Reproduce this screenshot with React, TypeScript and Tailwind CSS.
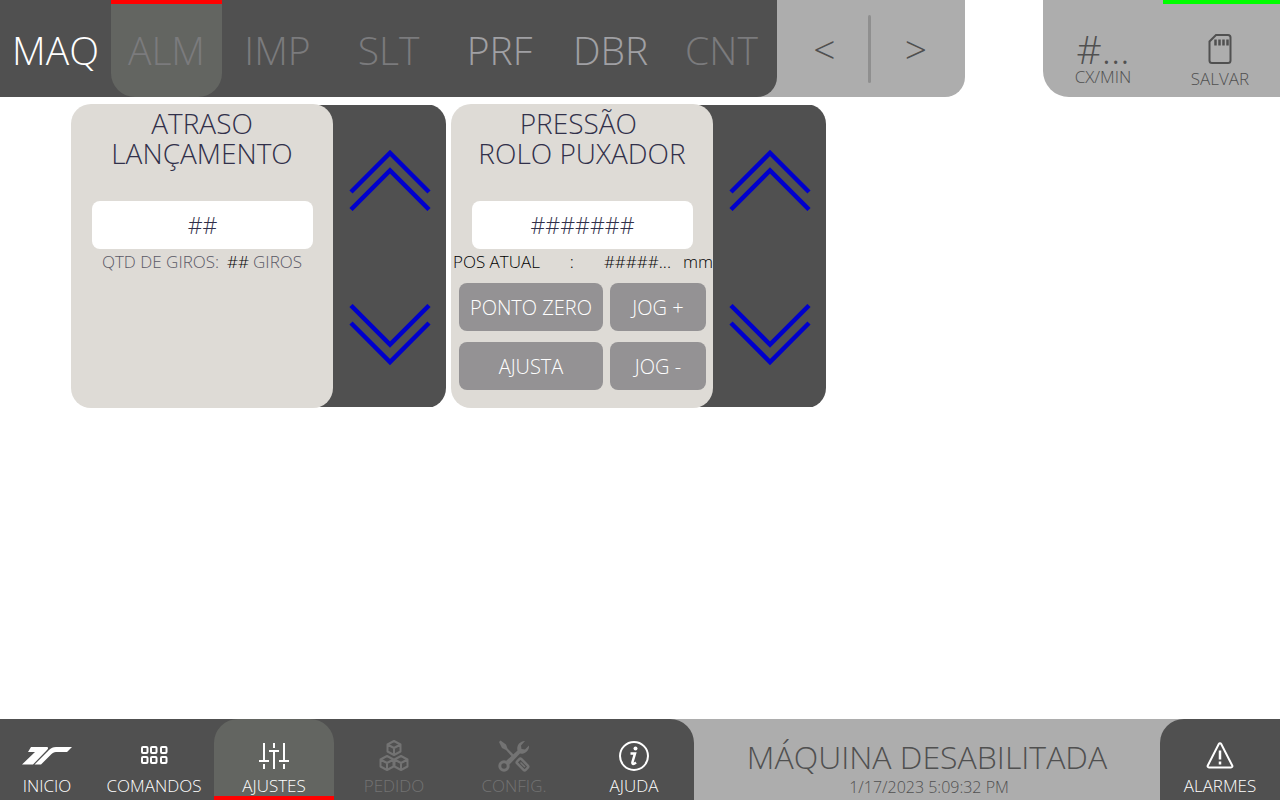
import type { ReactNode } from "react";

type Tab = { label: string; tone: string; active?: boolean };

const tabs: Tab[] = [
  { label: "MAQ", tone: "text-white" },
  { label: "ALM", tone: "text-[#7b7b7d]", active: true },
  { label: "IMP", tone: "text-[#7b7b7d]" },
  { label: "SLT", tone: "text-[#7b7b7d]" },
  { label: "PRF", tone: "text-[#a0a0a4]" },
  { label: "DBR", tone: "text-[#a0a0a4]" },
  { label: "CNT", tone: "text-[#7b7b7d]" },
];

function TopTab({ label, tone, active }: Tab) {
  return (
    <button
      type="button"
      className={`h-full w-[111px] border-t-4 pb-[2px] text-[39px] leading-none font-light ${tone} ${
        active ? "rounded-b-3xl border-[#ff0000] bg-[#636561]" : "border-transparent"
      }`}
    >
      {label}
    </button>
  );
}

function Header() {
  return (
    <header className="flex h-[97px] justify-between">
      <div className="flex rounded-br-[20px] bg-[#adadad]">
        <nav className="flex rounded-br-[20px] bg-[#505050]">
          {tabs.map((tab) => (
            <TopTab key={tab.label} {...tab} />
          ))}
        </nav>
        <div className="flex items-center text-[39px] leading-none font-light text-[#505050]">
          <button type="button" aria-label="Anterior" className="h-full w-[91px] pl-1">
            &lt;
          </button>
          <span className="h-[68px] w-[3px] rounded bg-[#8f8f8f]" />
          <button type="button" aria-label="Próximo" className="h-full w-[94px] pr-1">
            &gt;
          </button>
        </div>
      </div>
      <div className="flex rounded-bl-[26px] bg-[#adadad] text-[#505050]">
        <div className="flex w-[120px] flex-col items-center pt-[33px]">
          <span className="text-[39px] leading-8 font-light">#...</span>
          <span className="text-[17px] leading-6 font-light">CX/MIN</span>
        </div>
        <button
          type="button"
          className="flex w-[117px] flex-col items-center border-t-4 border-[#00ff00] pt-[29px] pr-[3px]"
        >
          <svg width="24" height="32" viewBox="0 0 24 32" fill="none" stroke="currentColor" strokeWidth="2">
            <path d="M8 2h12a2.5 2.5 0 0 1 2.5 2.5v23a2.5 2.5 0 0 1-2.5 2.5H4a2.5 2.5 0 0 1-2.5-2.5V8.5Z" />
            <path d="M7.5 6.500v6M11.5 6.500v6M15.5 6.500v6M19.500 6.500v6" strokeWidth="2.5" />
          </svg>
          <span className="text-[17px] leading-7 font-light">SALVAR</span>
        </button>
      </div>
    </header>
  );
}

function Chevrons({ down }: { down?: boolean }) {
  return (
    <svg
      width="82"
      height="62"
      viewBox="0 0 82 62"
      fill="none"
      stroke="#0000cd"
      strokeWidth="4.5"
      className={down ? "rotate-180" : ""}
    >
      <path d="M2 43 41 4 80 43M2 60.5 41 21.5 80 60.5" />
    </svg>
  );
}

function Panel({ title, label, value, children }: { title: [string, string]; label: string; value: string; children: ReactNode }) {
  return (
    <section className="flex items-center rounded-[20px] bg-[linear-gradient(#505050,#505050)] bg-[length:200px_302px] bg-right bg-no-repeat">
      <div className="flex h-[304px] w-[262px] flex-col rounded-[20px] bg-[#dedbd6]">
        <h2 className="pt-1 text-center text-[28px] leading-[30px] font-light text-[#31304a]">
          {title[0]}
          <br />
          {title[1]}
        </h2>
        <input
          type="text"
          aria-label={label}
          defaultValue={value}
          className="mt-[33px] mr-5 ml-[21px] h-12 rounded-lg bg-white text-center text-[23px] font-light text-[#31304a]"
        />
        {children}
      </div>
      <div className="flex h-[302px] w-[113px] flex-col items-center justify-between pt-11 pb-[41px]">
        <button type="button" aria-label={`Aumentar ${label}`}>
          <Chevrons />
        </button>
        <button type="button" aria-label={`Diminuir ${label}`}>
          <Chevrons down />
        </button>
      </div>
    </section>
  );
}

function PanelButton({ children }: { children: ReactNode }) {
  return (
    <button type="button" className="h-12 rounded-lg bg-[#949294] pt-[2px] text-xl font-light text-white">
      {children}
    </button>
  );
}

function NavItem({ label, icon, tone = "text-white", active }: { label: string; icon: ReactNode; tone?: string; active?: boolean }) {
  return (
    <button
      type="button"
      className={`flex h-full w-[120px] flex-col items-center border-b-4 pt-[21px] ${tone} ${
        active ? "rounded-t-3xl border-[#ff0000] bg-[#636561]" : "border-transparent"
      }`}
    >
      <span className="flex h-8 shrink-0 items-center">{icon}</span>
      <span className="shrink-0 text-[17px] leading-7 font-light">{label}</span>
    </button>
  );
}

function LogoIcon() {
  return (
    <svg width="50" height="20" viewBox="0 0 50 20" fill="currentColor">
      <path d="M9 1h15.500c2 0 2 1.500.5 3L11 18.500H0L13 6H6Z" />
      <path d="M12.500 18.500H19L29 8.500c1.500-1.500 3-2.500 5-2.500h11l5-5H34c-3 0-5 1-7 3Z" />
    </svg>
  );
}

function GridIcon() {
  return (
    <svg width="28" height="20" viewBox="0 0 28 20" fill="none" stroke="currentColor" strokeWidth="2">
      {[2, 11, 21].map((x) => (
        <g key={x}>
          <rect x={x} y="1" width="5.5" height="6" rx="1" />
          <rect x={x} y="11" width="5.5" height="6" rx="1" />
        </g>
      ))}
    </svg>
  );
}

function SlidersIcon() {
  return (
    <svg width="30" height="28" viewBox="0 0 30 28" fill="none" stroke="currentColor" strokeWidth="2">
      <path d="M5 1v18M0 19h10M5 22v5M15 1v5M10 9h10M15 9v18M25 1v18M20 19h10M25 22v5" />
    </svg>
  );
}

function Cube({ x, y }: { x: number; y: number }) {
  return (
    <path
      transform={`translate(${x} ${y})`}
      d="M8 1 14.5 4.500v7L8 15 1.500 11.500v-7ZM1.500 4.500 8 8l6.500-3.500M8 8v7"
    />
  );
}

function CubesIcon() {
  return (
    <svg width="32" height="32" viewBox="0 0 32 32" fill="none" stroke="currentColor" strokeWidth="2" strokeLinejoin="round">
      <Cube x={8} y={0} />
      <Cube x={1} y={15} />
      <Cube x={15} y={15} />
    </svg>
  );
}

function ToolsIcon() {
  return (
    <svg width="32" height="32" viewBox="0 0 32 32" fill="none" stroke="currentColor">
      <path d="M1 2 2.500.5 8 4.500 9.500 8.500 17 16 15 18 8 10 4 8Z" fill="currentColor" stroke="none" />
      <path
        d="M27 1a7.500 7.500 0 0 0-7.500 9.500L8 21l3.500 3.500L22 13.500a7.500 7.500 0 0 0 9-8l-4 4-3.500-.5-.5-3.500Z"
        fill="currentColor"
        stroke="none"
      />
      <circle cx="6" cy="26" r="4.200" strokeWidth="3" />
      <rect transform="translate(24.500 24.500) rotate(-45)" x="-3" y="-6" width="6" height="12" rx="1.500" strokeWidth="2.500" />
      <path d="m22.500 22.500 4.500 4.500" strokeWidth="1.500" />
    </svg>
  );
}

function InfoIcon() {
  return (
    <svg width="32" height="32" viewBox="0 0 32 32" fill="none" stroke="currentColor">
      <circle cx="16" cy="16" r="14" strokeWidth="2" />
      <circle cx="17.500" cy="8.500" r="2" fill="currentColor" stroke="none" />
      <path d="M12.500 13.500h4.500l-2.500 8.500c-.5 2.500 1 2.500 3.500.5" strokeWidth="2.500" />
    </svg>
  );
}

function WarningIcon() {
  return (
    <svg width="28" height="28" viewBox="0 0 28 28" fill="none" stroke="currentColor" strokeWidth="2" strokeLinejoin="round">
      <path d="M12.800 2c.6-1 1.800-1 2.400 0l11 21.500c.5 1 0 2-1.200 2H3c-1.200 0-1.700-1-1.200-2Z" />
      <path d="M14 8.500v9M14 19.500v3" strokeWidth="2.500" />
    </svg>
  );
}

function Footer() {
  return (
    <footer className="flex h-[81px] bg-[#adadad]">
      <nav className="flex rounded-tr-3xl bg-[#505050]">
        <div className="flex w-[94px]">
          <NavItem label="INICIO" icon={<LogoIcon />} />
        </div>
        <NavItem label="COMANDOS" icon={<GridIcon />} />
        <NavItem label="AJUSTES" icon={<SlidersIcon />} active />
        <NavItem label="PEDIDO" icon={<CubesIcon />} tone="text-[#737373]" />
        <NavItem label="CONFIG." icon={<ToolsIcon />} tone="text-[#737373]" />
        <NavItem label="AJUDA" icon={<InfoIcon />} />
      </nav>
      <div className="flex flex-1 flex-col items-center pt-5 pl-1 font-light text-[#505050]">
        <p className="pr-2 pl-1 text-[32px] leading-9">MÁQUINA DESABILITADA</p>
        <time className="text-base leading-6">1/17/2023 5:09:32 PM</time>
      </div>
      <div className="rounded-tl-3xl bg-[#505050]">
        <NavItem label="ALARMES" icon={<WarningIcon />} />
      </div>
    </footer>
  );
}

export default function App() {
  return (
    <div className="flex min-h-screen flex-col bg-white font-['Open_Sans',sans-serif]">
      <Header />
      <main className="flex flex-1 items-start gap-[5px] px-[71px] pt-[7px]">
        <Panel title={["ATRASO", "LANÇAMENTO"]} label="Atraso lançamento" value="##">
          <p className="flex justify-center text-[17px] leading-[26px] font-light text-[#5a5966]">
            <span>QTD DE GIROS:</span>
            <span className="mr-1 ml-2 text-black">##</span>
            <span>GIROS</span>
          </p>
        </Panel>
        <Panel title={["PRESSÃO\u00a0", "ROLO PUXADOR"]} label="Pressão rolo puxador" value="#######">
          <p className="flex justify-between pl-[2px] text-[17px] leading-[26px] font-light text-black">
            <span>POS ATUAL</span>
            <span>:</span>
            <span className="flex gap-3">
              <span>#####...</span>
              <span>mm</span>
            </span>
          </p>
          <div className="grid grid-cols-[3fr_2fr] gap-x-[7px] gap-y-[11px] pt-2 pr-[7px] pl-2">
            <PanelButton>PONTO ZERO</PanelButton>
            <PanelButton>JOG +</PanelButton>
            <PanelButton>AJUSTA</PanelButton>
            <PanelButton>JOG -</PanelButton>
          </div>
        </Panel>
      </main>
      <Footer />
    </div>
  );
}
